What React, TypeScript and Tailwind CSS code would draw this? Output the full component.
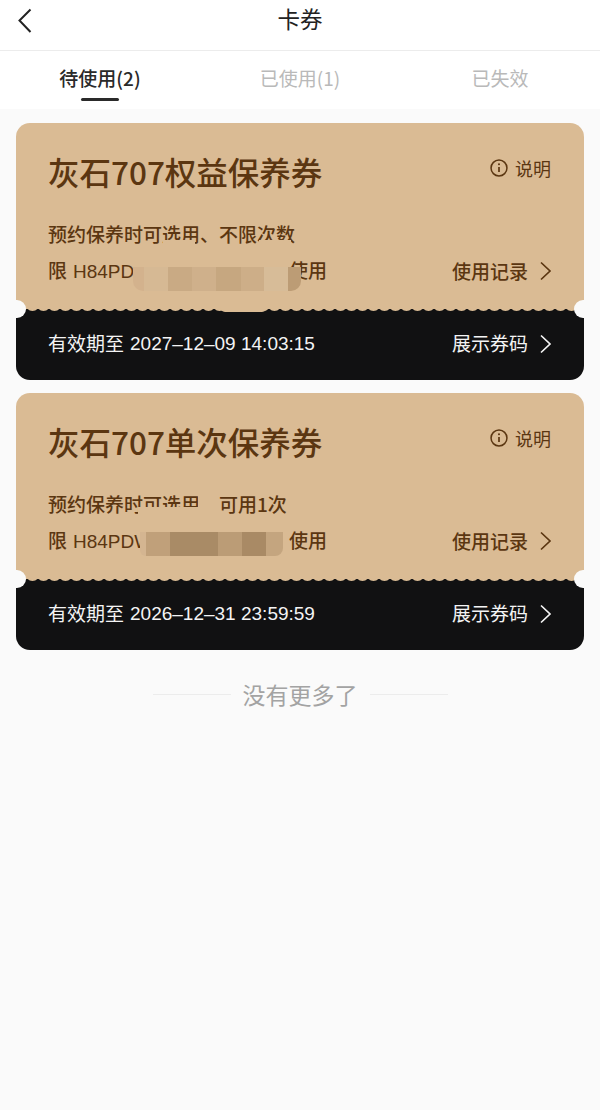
type Coupon = {
  title: string;
  desc: string;
  plate: string;
  expiry: string;
  mask: { pos: string; cells: string[] };
  smudges: string[];
};

const coupons: Coupon[] = [
  {
    title: "灰石707权益保养券",
    desc: "预约保养时可选用、不限次数",
    plate: "H84PD",
    expiry: "2027–12–09 14:03:15",
    mask: {
      pos: "left-[117px] top-[144px]",
      cells: [
        "w-[11px] bg-[#d3b28d] rounded-bl-[10px]",
        "w-[24px] bg-[#d6b994]",
        "w-[24px] bg-[#c9aa84]",
        "w-[24px] bg-[#cfb08b]",
        "w-[25px] bg-[#c6a780]",
        "w-[23px] bg-[#cdae88]",
        "w-[24px] bg-[#d7bc98]",
        "w-[13px] bg-[#bc9c75] rounded-br-[10px]",
      ],
    },
    smudges: [
      "left-[147px] top-[117px] w-[32px] h-[4px]",
      "left-[243px] top-[117px] w-[32px] h-[4px]",
      "left-[204px] top-[184px] w-[47px] h-[5px] rounded-b-full z-10",
    ],
  },
  {
    title: "灰石707单次保养券",
    desc: "预约保养时可选用、可用1次",
    plate: "H84PDW",
    expiry: "2026–12–31 23:59:59",
    mask: {
      pos: "left-[124px] top-[139px]",
      cells: [
        "w-[6px] bg-[#d4b591] rounded-bl-[8px]",
        "w-[24px] bg-[#c0a07a]",
        "w-[48px] bg-[#a98b66]",
        "w-[24px] bg-[#bb9c76]",
        "w-[24px] bg-[#a98a65]",
        "w-[17px] bg-[#c4a57f] rounded-br-[8px]",
      ],
    },
    smudges: [
      "left-[122px] top-[114px] w-[68px] h-[8px]",
      "left-[182px] top-[99px] w-[16px] h-[22px]",
    ],
  },
];

function InfoIcon() {
  return (
    <svg width="18" height="18" viewBox="0 0 19 19" fill="none" stroke="#5b3611" strokeWidth="1.6">
      <circle cx="9.5" cy="9.5" r="8.4" />
      <path d="M9.5 8.4v5.2" strokeWidth="1.8" />
      <circle cx="9.5" cy="5.6" r="1.1" fill="#5b3611" stroke="none" />
    </svg>
  );
}

function Chevron() {
  return (
    <svg width="13" height="20" viewBox="0 0 13 20" fill="none" stroke="currentColor" strokeWidth="1.7">
      <path d="M2 1.5 11 10l-9 8.5" />
    </svg>
  );
}

function Scallop({ id }: { id: string }) {
  return (
    <svg className="absolute left-0 top-[-2px] w-full h-[5px]" aria-hidden="true">
      <defs>
        <pattern id={id} width="11" height="5" patternUnits="userSpaceOnUse">
          <path d="M0 1.5Q5.5 6.5 11 1.5V0H0Z" fill="#dabb94" />
        </pattern>
      </defs>
      <rect width="100%" height="5" fill={`url(#${id})`} />
    </svg>
  );
}

function CouponCard({ coupon, id }: { coupon: Coupon; id: string }) {
  return (
    <div className="relative rounded-[14px] overflow-hidden">
      <div className="relative h-[186px] bg-[#dabb94] px-[32px] text-[#5b3611]">
        <div className="flex items-start justify-between">
          <h2 className="pt-[25px] text-[31.5px] leading-[46px] font-medium whitespace-nowrap">{coupon.title}</h2>
          <div className="pt-[32px] pr-[1px] flex items-center gap-[7px] text-[18px] leading-[26px]">
            <InfoIcon />
            <span>说明</span>
          </div>
        </div>
        <p className="mt-[26px] text-[19px] leading-[28px] font-medium whitespace-nowrap">{coupon.desc}</p>
        <div className="mt-[8px] flex items-center justify-between text-[19px] leading-[28px]">
          <span className="flex font-medium">
            <span className="w-[241px] whitespace-nowrap">
              限
              <span className="ml-[6px] font-['Liberation_Sans',sans-serif] font-normal">{coupon.plate}</span>
            </span>
            <span>使用</span>
          </span>
          <span className="flex items-center gap-[11px] font-medium">
            使用记录
            <Chevron />
          </span>
        </div>
        {coupon.smudges.map((s) => (
          <div key={s} className={`absolute bg-[#dabb94] ${s}`} />
        ))}
        <div className={`absolute flex h-[24px] ${coupon.mask.pos}`}>
          {coupon.mask.cells.map((c) => (
            <div key={c} className={c} />
          ))}
        </div>
      </div>
      <div className="relative h-[71px] bg-[#111112] px-[32px] pb-[2px] flex items-center justify-between text-[19px] text-[#f4f4f4]">
        <Scallop id={id} />
        <span className="flex items-center whitespace-nowrap">
          有效期至
          <span className="ml-[6px] pt-[2px] font-['Liberation_Sans',sans-serif]">{coupon.expiry}</span>
        </span>
        <span className="flex items-center gap-[11px]">
          展示券码
          <Chevron />
        </span>
      </div>
      <div className="absolute left-[-10px] top-[177px] w-[20px] h-[18px] rounded-full bg-[#fafafa]" />
      <div className="absolute right-[-10px] top-[177px] w-[20px] h-[18px] rounded-full bg-[#fafafa]" />
    </div>
  );
}

export default function App() {
  return (
    <div className="w-[600px] h-[1110px] bg-[#fafafa] overflow-hidden font-['Noto_Sans_CJK_SC',sans-serif]">
      <header className="relative h-[51px] bg-white border-b border-[#ececec] flex items-start justify-center">
        <svg
          className="absolute left-[16px] top-[8px]"
          width="18"
          height="26"
          viewBox="0 0 18 26"
          fill="none"
          stroke="#222"
          strokeWidth="2"
        >
          <path d="M14.5 1.5 3.5 12.5l11 11.5" />
        </svg>
        <h1 className="pt-[3px] text-[22.5px] leading-[30px] text-[#222]">卡券</h1>
      </header>
      <nav className="h-[58px] bg-white grid grid-cols-[200px_200px_200px] text-[19px] text-[#b9b9b9]">
        <div className="relative flex justify-center pt-[13px] leading-[28px] font-medium text-[#2a2a2a]">
          待使用(2)
          <div className="absolute left-[81px] top-[47px] w-[38px] h-[3px] rounded-full bg-[#2a2a2a]" />
        </div>
        <div className="flex justify-center pt-[13px] leading-[28px]">已使用(1)</div>
        <div className="flex justify-center pt-[13px] leading-[28px]">已失效</div>
      </nav>
      <main className="px-[16px] pt-[14px] flex flex-col gap-[13px]">
        {coupons.map((c, i) => (
          <CouponCard key={c.title} coupon={c} id={`scallop-${i}`} />
        ))}
      </main>
      <div className="mt-[28px] flex items-center justify-center gap-[12px] text-[23px] leading-[32px] text-[#a3a3a3]">
        <div className="w-[78px] h-px bg-[#ececec]" />
        <span>没有更多了</span>
        <div className="w-[78px] h-px bg-[#ececec]" />
      </div>
    </div>
  );
}
